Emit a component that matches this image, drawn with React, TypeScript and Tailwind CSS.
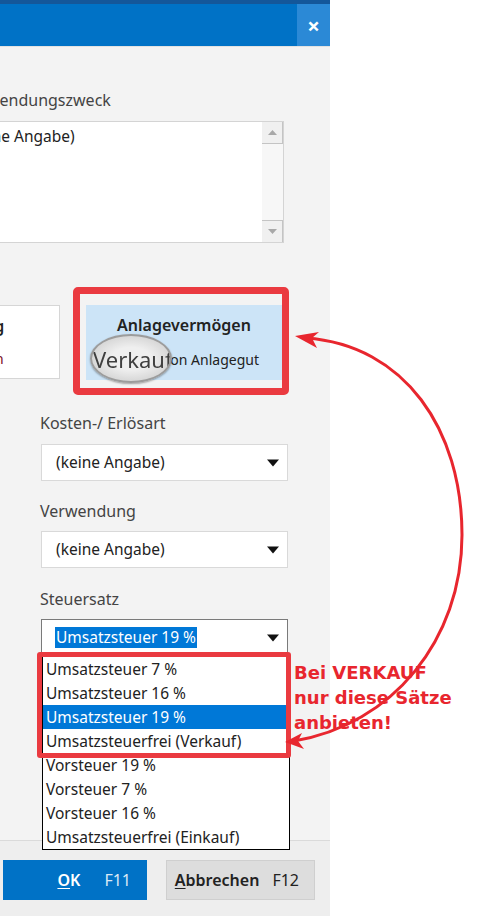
import React from 'react';

const SelectArrow = () => (
    <svg width="14" height="8" viewBox="0 0 14 8">
        <path d="M1 0.5 L13 0.5 L7 7.5 Z" fill="#111" />
    </svg>
);

const ScrollArrow = ({ up }: { up?: boolean }) => (
    <svg width="9" height="5" viewBox="0 0 9 5">
        <path d={up ? 'M0 5 L4.5 0 L9 5 Z' : 'M0 0 L9 0 L4.5 5 Z'} fill="#a8a8a8" />
    </svg>
);

const Combo = ({ value }: { value: string }) => (
    <div className="w-[247px] h-[37px] bg-white border border-[#d9d9d9] flex items-center justify-between pl-[14px] pr-[7px]">
        <span className="text-[15.5px] text-[#222]">{value}</span>
        <SelectArrow />
    </div>
);

const steuersaetze = [
    'Umsatzsteuer 7 %',
    'Umsatzsteuer 16 %',
    'Umsatzsteuer 19 %',
    'Umsatzsteuerfrei (Verkauf)',
    'Vorsteuer 19 %',
    'Vorsteuer 7 %',
    'Vorsteuer 16 %',
    'Umsatzsteuerfrei (Einkauf)',
];

const App = () => {
    return (
        <div className="relative w-[495px] h-[916px] bg-white overflow-hidden font-['Noto_Sans',sans-serif]">
            <div className="flex flex-col w-[330px] h-full bg-[#f3f3f3]">
                {/* window frame */}
                <div className="h-[4px] bg-[#14579a]" />
                <div className="h-[42px] bg-[#0072c6] flex justify-end">
                    <div className="w-[33px] h-full bg-[#2b89d6] flex items-center justify-center text-white text-[22px] font-bold leading-none">
                        ×
                    </div>
                </div>

                <div className="flex-1 flex flex-col overflow-hidden border-t border-[#e2e2e2]">
                    <div className="mt-[43px] -ml-[38px] text-[16px] leading-[20px] text-[#444] whitespace-nowrap">
                        Verwendungszweck
                    </div>

                    {/* text area with scrollbar */}
                    <div className="mt-[11px] -ml-[40px] w-[324px] h-[122px] bg-white border border-[#d4d4d4] flex">
                        <div className="flex-1 pl-[5px] pt-[4px] text-[15.5px] leading-[20px] text-[#222]">(keine Angabe)</div>
                        <div className="w-[21px] flex flex-col bg-[#f5f5f5]">
                            <div className="h-[22px] bg-[#f0f0f0] border-b border-r border-[#c4c4c4] flex items-center justify-center">
                                <ScrollArrow up />
                            </div>
                            <div className="flex-1 bg-[#f7f7f7]" />
                            <div className="h-[22px] bg-[#f0f0f0] border-t border-r border-[#c4c4c4] flex items-center justify-center">
                                <ScrollArrow />
                            </div>
                        </div>
                    </div>

                    {/* option tiles */}
                    <div className="mt-[62px] -ml-[136px] flex gap-[26px]">
                        <div className="w-[196px] h-[74px] bg-white border border-[#d6d6d6] flex flex-col items-center pr-[20px] pt-[10px] gap-[13px] whitespace-nowrap">
                            <span className="text-[15.5px] leading-[20px] font-semibold text-[#222]">Abschreibung</span>
                            <span className="text-[14px] leading-[20px] text-[#7a0b23]">Zugang buchen</span>
                        </div>
                        <div className="w-[196px] h-[75px] bg-[#cce4f7] flex flex-col items-center pt-[10px] gap-[15px] whitespace-nowrap">
                            <span className="text-[16px] leading-[20px] font-semibold text-[#222]">Anlagevermögen</span>
                            <span className="text-[14px] leading-[20px] text-[#222]">Verkauf von Anlagegut</span>
                        </div>
                    </div>

                    <div className="pl-[40px] flex flex-col">
                        <div className="mt-[33px] text-[16px] leading-[20px] text-[#444]">Kosten-/ Erlösart</div>
                        <div className="mt-[11px] ml-px">
                            <Combo value="(keine Angabe)" />
                        </div>
                        <div className="mt-[20px] text-[16px] leading-[20px] text-[#444]">Verwendung</div>
                        <div className="mt-[10px] ml-px">
                            <Combo value="(keine Angabe)" />
                        </div>
                        <div className="mt-[21px] text-[16px] leading-[20px] text-[#444]">Steuersatz</div>
                        <div className="mt-[10px] ml-px w-[247px] h-[37px] bg-white border border-[#7a7a7a] flex items-center justify-between pl-[13px] pr-[7px]">
                            <span className="text-[15.5px] leading-[21px] bg-[#0078d7] text-white px-px">Umsatzsteuer 19 %</span>
                            <SelectArrow />
                        </div>
                    </div>
                </div>

                {/* footer buttons */}
                <div className="h-[76px] border-t border-[#dadada] bg-[#eeeeee] flex gap-[19px] pl-[3px] pt-[19px]">
                    <button className="w-[144px] h-[40px] bg-[#0072c6] flex items-center justify-end pr-[16px] gap-[24px] text-[16px]">
                        <span className="font-semibold text-white">
                            <span className="underline underline-offset-2">O</span>K
                        </span>
                        <span className="text-[#dbe9f6]">F11</span>
                    </button>
                    <button className="w-[149px] h-[40px] bg-[#dddddd] border border-[#cfcfcf] flex items-center justify-end pr-[15px] gap-[13px] text-[16px] text-[#222]">
                        <span className="font-semibold">
                            <span className="underline underline-offset-2">A</span>bbrechen
                        </span>
                        <span>F12</span>
                    </button>
                </div>
            </div>

            {/* open list of the Steuersatz combo */}
            <div className="absolute left-[42px] top-[656px] w-[248px] bg-white border border-black flex flex-col">
                {steuersaetze.map((s, i) => (
                    <div
                        key={s}
                        className={
                            i === 2
                                ? 'h-[24px] pl-[3px] text-[15.5px] leading-[24px] bg-[#0078d7] text-white'
                                : 'h-[24px] pl-[3px] text-[15.5px] leading-[24px] text-[#222]'
                        }
                    >
                        {s}
                    </div>
                ))}
            </div>

            {/* magnifier lens */}
            <div className="absolute left-[90px] top-[334px] w-[82px] h-[49px] rounded-[50%] border-2 border-[#9c9c9c] bg-[radial-gradient(ellipse_at_center,#efefef_35%,#c4c4c4_100%)] shadow-[0_1px_2px_rgba(0,0,0,0.35)] overflow-hidden flex items-center pl-[1px]">
                <span className="text-[22px] leading-none text-[#3f3f3f] blur-[0.6px] whitespace-nowrap">Verkauf</span>
            </div>

            {/* annotations */}
            <div className="absolute left-[73px] top-[287px] w-[216px] h-[108px] border-[7px] border-[#ea3a40] rounded-[5px]" />
            <div className="absolute left-[37px] top-[652px] w-[254px] h-[106px] border-[5px] border-[#ea3a40] rounded-[3px]" />
            <div className="absolute left-[294px] top-[660px] text-[18px] leading-[25px] font-bold text-[#e8262e] font-['DejaVu_Sans',sans-serif]">
                Bei VERKAUF
                <br />
                nur diese Sätze
                <br />
                anbieten!
            </div>
            <svg className="absolute left-0 top-0" width="495" height="916" viewBox="0 0 495 916">
                <path
                    d="M306 338 C 405 345, 462 430, 462 535 C 462 640, 392 725, 294 741"
                    fill="none"
                    stroke="#e8262e"
                    strokeWidth="3"
                />
                <path d="M295 336 L319 332 L312 338 L317 348 Z" fill="#e8262e" />
                <path d="M285 742 L302 733 L298 741 L304 749 Z" fill="#e8262e" />
            </svg>
        </div>
    );
};

export default App;
